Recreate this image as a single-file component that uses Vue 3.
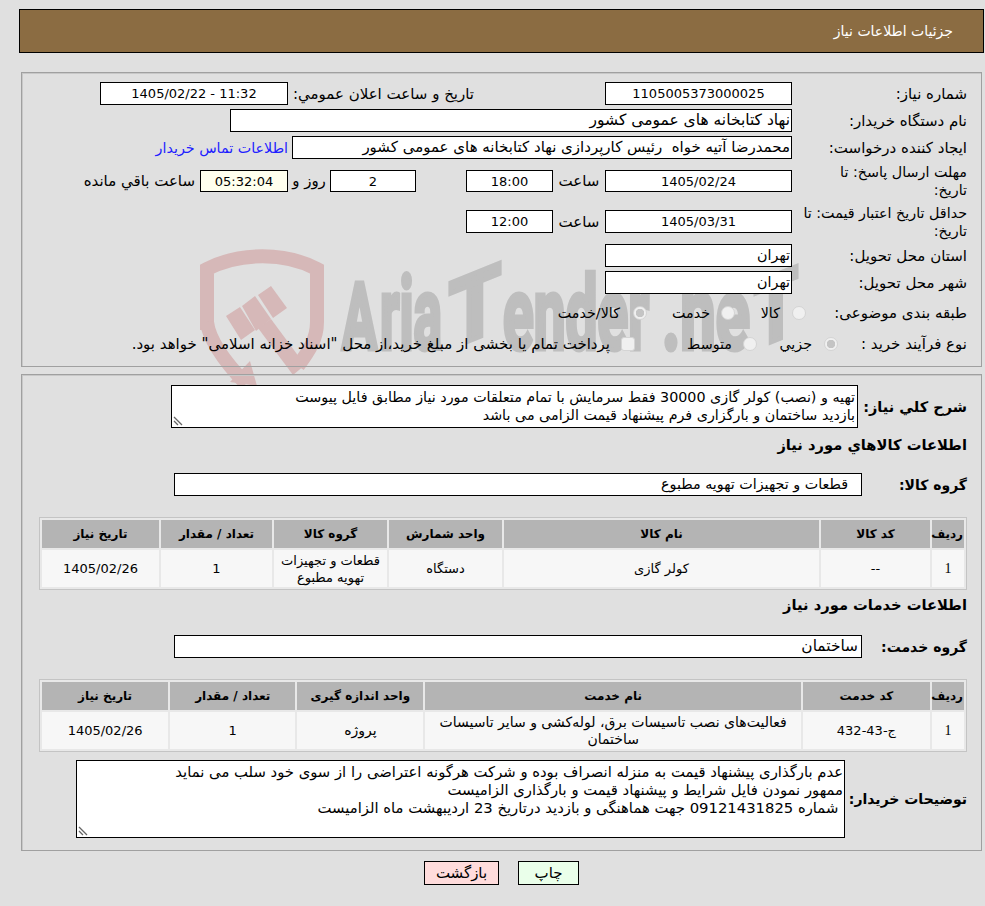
<template>
    <div class="page">
        <svg class="watermark" viewBox="0 0 985 906" width="985" height="906">
            <g fill="none" stroke="#d6b8b8" stroke-width="14">
                <path d="M207 330V269C240 252 285 252 317 269V322C317 340 308 352 298 366"/>
                <path d="M207 322C209 340 225 362 246 384"/>
            </g>
            <g fill="#d6b8b8">
                <path d="M258 328L271 319L305 365L293 375Z"/>
                <path d="M226 316L240 307L255 330L241 340Z"/>
                <path d="M242 306L255 296L271 319L256 331Z"/>
                <path d="M258 295L271 286L287 308L273 318Z"/>
                <path d="M250 361L257 386L230 382Z"/>
            </g>
            <g class="wm-text" fill="#bebebe" stroke="#bebebe" stroke-width="5">
                <text x="342" y="349" font-size="92" textLength="35" lengthAdjust="spacingAndGlyphs">A</text>
                <text x="380" y="349" font-size="102" textLength="62" lengthAdjust="spacingAndGlyphs">ria</text>
                <text transform="translate(449 349) skewY(-22)" font-size="92" textLength="52" lengthAdjust="spacingAndGlyphs">T</text>
                <text x="503" y="349" font-size="102" textLength="146" lengthAdjust="spacingAndGlyphs">ender</text>
                <text x="662" y="349" font-size="102" textLength="88" lengthAdjust="spacingAndGlyphs">.ne</text>
                <text transform="translate(754 349) skewY(-22)" font-size="92" textLength="44" lengthAdjust="spacingAndGlyphs">T</text>
            </g>
        </svg>

        <div class="header">جزئیات اطلاعات نیاز</div>

        <div class="panel panel-info">
            <div class="row">
                <div class="label">شماره نیاز:</div>
                <div class="field nums w-date">1105005373000025</div>
                <div class="text announce">تاریخ و ساعت اعلان عمومي:</div>
                <div class="field nums w-announce" dir="ltr">1405/02/22 - 11:32</div>
            </div>
            <div class="row">
                <div class="label">نام دستگاه خریدار:</div>
                <div class="field start w-buyer">نهاد کتابخانه های عمومی کشور</div>
            </div>
            <div class="row">
                <div class="label">ایجاد کننده درخواست:</div>
                <div class="field start w-creator">محمدرضا آتیه خواه &nbsp;رئیس کارپردازی نهاد کتابخانه های عمومی کشور</div>
                <a class="link">اطلاعات تماس خریدار</a>
            </div>
            <div class="row deadline">
                <div class="label two-line">مهلت ارسال پاسخ: تا<br>تاریخ:</div>
                <div class="field nums w-date short">1405/02/24</div>
                <div class="text hour">ساعت</div>
                <div class="field nums w-time short">18:00</div>
                <div class="field nums w-days short">2</div>
                <div class="text days">روز و</div>
                <div class="field nums w-left short">05:32:04</div>
                <div class="text">ساعت باقي مانده</div>
            </div>
            <div class="row validity">
                <div class="label two-line">حداقل تاریخ اعتبار قیمت: تا<br>تاریخ:</div>
                <div class="field nums w-date">1405/03/31</div>
                <div class="text hour">ساعت</div>
                <div class="field nums w-time">12:00</div>
            </div>
            <div class="row">
                <div class="label">استان محل تحویل:</div>
                <div class="field start w-date">تهران</div>
            </div>
            <div class="row">
                <div class="label">شهر محل تحویل:</div>
                <div class="field start w-date">تهران</div>
            </div>
            <div class="row subject">
                <div class="label">طبقه بندی موضوعی:</div>
                <span class="radio"></span><span class="text opt-kala">کالا</span>
                <span class="radio"></span><span class="text opt-khedmat">خدمت</span>
                <span class="radio checked"></span><span class="text opt-both">کالا/خدمت</span>
            </div>
            <div class="row process">
                <div class="label">نوع فرآیند خرید :</div>
                <span class="radio checked"></span><span class="text opt-jozi">جزیي</span>
                <span class="radio"></span><span class="text opt-motavaset">متوسط</span>
                <span class="check"></span><span class="text opt-pay">پرداخت تمام یا بخشی از مبلغ خرید،از محل "اسناد خزانه اسلامی" خواهد بود.</span>
            </div>
        </div>

        <div class="panel panel-detail">
            <div class="row-desc">
                <div class="title desc-label">شرح کلي نیاز:</div>
                <div class="area area-need">
                    <div>تهیه و (نصب) کولر گازی 30000 فقط سرمایش با تمام متعلقات مورد نیاز مطابق فایل پیوست</div>
                    <div>بازدید ساختمان و بارگزاری فرم پیشنهاد قیمت الزامی می باشد</div>
                    <svg class="grip" viewBox="0 0 10 10" width="10" height="10"><path d="M1 1L9 9M1 5L5 9" stroke="#666" stroke-width="1.3" fill="none"/></svg>
                </div>
            </div>
            <div class="heading goods-heading">اطلاعات کالاهاي مورد نیاز</div>
            <div class="row-group goods-group">
                <div class="title">گروه کالا:</div>
                <div class="field start group-field goods-field">قطعات و تجهیزات تهویه مطبوع</div>
            </div>
            <table class="grid grid-goods">
                <colgroup><col v-for="w in goodsCols" :key="w" :style="{width: w + 'px'}"></colgroup>
                <thead><tr><th v-for="h in goodsHead" :key="h">{{ h }}</th></tr></thead>
                <tbody><tr><td class="num">1</td><td v-for="c in goodsRow" :key="c" :class="{nums: /\d/.test(c)}">{{ c }}</td></tr></tbody>
            </table>
            <div class="heading service-heading">اطلاعات خدمات مورد نیاز</div>
            <div class="row-group service-group">
                <div class="title">گروه خدمت:</div>
                <div class="field start group-field service-field">ساختمان</div>
            </div>
            <table class="grid grid-service">
                <colgroup><col v-for="w in serviceCols" :key="w" :style="{width: w + 'px'}"></colgroup>
                <thead><tr><th v-for="h in serviceHead" :key="h">{{ h }}</th></tr></thead>
                <tbody><tr><td class="num">1</td><td v-for="c in serviceRow" :key="c" :class="{nums: /\d/.test(c)}">{{ c }}</td></tr></tbody>
            </table>
            <div class="row-notes">
                <div class="title notes-label">توضیحات خریدار:</div>
                <div class="area area-notes">
                    <div>عدم بارگذاری پیشنهاد قیمت به منزله انصراف بوده و شرکت هرگونه اعتراضی را از سوی خود سلب می نماید</div>
                    <div>ممهور نمودن فایل شرایط و پیشنهاد قیمت و بارگذاری الزامیست</div>
                    <div>&nbsp;شماره 09121431825 جهت هماهنگی و بازدید درتاریخ 23 اردیبهشت ماه الزامیست</div>
                    <svg class="grip" viewBox="0 0 10 10" width="10" height="10"><path d="M1 1L9 9M1 5L5 9" stroke="#666" stroke-width="1.3" fill="none"/></svg>
                </div>
            </div>
        </div>

        <div class="actions">
            <button class="btn btn-print">چاپ</button>
            <button class="btn btn-back">بازگشت</button>
        </div>
    </div>
</template>

<script setup>
const goodsCols = [32, 109, 315, 113, 113, 111, 117];
const goodsHead = ["ردیف", "کد کالا", "نام کالا", "واحد شمارش", "گروه کالا", "تعداد / مقدار", "تاریخ نیاز"];
const goodsRow = ["--", "کولر گازی", "دستگاه", "قطعات و تجهیزات تهویه مطبوع", "1", "1405/02/26"];

const serviceCols = [32, 127, 375, 126, 125, 126];
const serviceHead = ["ردیف", "کد خدمت", "نام خدمت", "واحد اندازه گیری", "تعداد / مقدار", "تاریخ نیاز"];
const serviceRow = ["ج-43-432", "فعالیت‌های نصب تاسیسات برق، لوله‌کشی و سایر تاسیسات ساختمان", "پروژه", "1", "1405/02/26"];
</script>

<style>
html, body {
    margin: 0;
    background: #e0e0e0;
}
</style>

<style scoped>
.page {
    position: relative;
    width: 985px;
    height: 906px;
    overflow: hidden;
    box-sizing: border-box;
    padding: 9px 1px 0 19px;
    direction: rtl;
    background: #e0e0e0;
    color: #000;
    font-family: "DejaVu Sans", sans-serif;
    font-size: 15px;
}

.watermark {
    position: absolute;
    left: 0;
    top: 0;
    direction: ltr;
    pointer-events: none;
}

.wm-text {
    font-family: Roboto, sans-serif;
    font-weight: 700;
}

.header, .panel, .actions {
    position: relative;
}

.header {
    height: 44px;
    box-sizing: border-box;
    border: 1px solid #000;
    background: #8b6c42;
    color: #fff;
    font-size: 14px;
    line-height: 42px;
    padding-right: 30px;
}

.panel {
    border: 1px solid #a0a0a0;
    box-shadow: inset 1px 1px 0 #c8c8c8;
    box-sizing: border-box;
    margin-left: 2px;
    margin-right: 2px;
    padding-right: 14px;
}

.panel-info {
    margin-top: 19px;
    height: 295px;
    padding-top: 9px;
    display: flex;
    flex-direction: column;
    gap: 4px;
}

.panel-detail {
    margin-top: 7px;
    height: 477px;
    padding-top: 10px;
}

.row {
    display: flex;
    align-items: center;
    min-height: 23px;
}

.row.deadline { height: 36px; }
.row.validity { height: 37px; }
.row.subject { height: 30px; }

.label {
    width: 175px;
    flex: none;
    box-sizing: border-box;
    padding-left: 4px;
    line-height: 18px;
}

.label.two-line {
    font-size: 14.3px;
    white-space: nowrap;
}

.subject .label { width: 161px; }
.process .label { width: 129px; }

.field {
    flex: none;
    height: 23px;
    box-sizing: border-box;
    border: 1px solid #000;
    background: #fff;
    text-align: center;
    line-height: 21px;
    white-space: nowrap;
    overflow: hidden;
}

.nums {
    font-size: 13px;
}

.field.short {
    height: 22px;
}

.field.start {
    text-align: right;
    padding-right: 1px;
}

.text {
    flex: none;
    white-space: nowrap;
}

.w-date { width: 187px; font-size: 14.3px; }
.w-date.nums { font-size: 13px; }
.w-announce { width: 188px; margin-right: 5px; }
.w-buyer { width: 562px; font-size: 15.5px; }
.w-creator { width: 500px; }
.w-time { width: 87px; }
.w-days { width: 86px; margin-right: 50px; }
.w-left { width: 88px; margin-left: 5px; background: #ffffee; }

.announce { width: 181px; margin-right: 131px; }
.hour { width: 52px; text-align: center; }
.days { width: 42px; text-align: center; }

.link {
    margin-right: 4px;
    color: #2020ff;
    font-size: 14.3px;
    white-space: nowrap;
}

.radio, .check {
    flex: none;
    width: 14px;
    height: 14px;
    box-sizing: border-box;
    border: 1px solid #d4d4d4;
    background: #f0f0f0;
}

.radio {
    border-radius: 50%;
}

.check {
    border-radius: 3px;
}

.radio.checked {
    background: radial-gradient(circle, #c4c4c4 0 4px, #f0f0f0 4.5px);
}

.opt-kala { width: 57px; padding-right: 12px; box-sizing: border-box; font-size: 14.3px; }
.opt-khedmat { width: 74px; padding-right: 11px; box-sizing: border-box; font-size: 14.3px; }
.opt-both { padding-right: 13px; font-size: 14.3px; }
.opt-jozi { width: 67px; padding-right: 12px; box-sizing: border-box; font-size: 14.3px; }
.opt-motavaset { width: 108px; padding-right: 11px; box-sizing: border-box; font-size: 14.3px; }
.opt-pay { padding-right: 11px; }

.title {
    font-weight: 700;
    font-size: 14px;
    white-space: nowrap;
}

.heading {
    font-weight: 700;
    font-size: 14.7px;
    white-space: nowrap;
    height: 20px;
    line-height: 20px;
}

.row-desc {
    display: flex;
    align-items: center;
    height: 43px;
}

.desc-label {
    width: 109px;
    flex: none;
    font-size: 14.5px;
}

.area {
    position: relative;
    flex: none;
    box-sizing: border-box;
    border: 1px solid #000;
    background: #fff;
    padding: 1px 1px 0 0;
    white-space: nowrap;
    overflow: hidden;
}

.area-need {
    width: 687px;
    height: 43px;
    padding: 2px 2px 0 0;
    font-size: 14.3px;
    line-height: 18px;
}

.area-notes {
    width: 769px;
    height: 78px;
    padding-top: 2px;
    font-size: 14.8px;
    line-height: 18px;
}

.grip {
    position: absolute;
    left: 1px;
    bottom: 1px;
}

.goods-heading { margin-top: 7px; }
.service-heading { margin-top: 5px; }

.row-group {
    display: flex;
    align-items: center;
}

.row-group .title {
    width: 105px;
    flex: none;
}

.goods-group { margin-top: 18px; }
.service-group { margin-top: 20px; }

.group-field {
    width: 688px;
}

.field.goods-field {
    padding-right: 13px;
    font-size: 14.3px;
}

.field.service-field {
    padding-right: 3px;
    font-size: 15.4px;
}

.grid {
    direction: rtl;
    table-layout: fixed;
    width: 928px;
    border-collapse: separate;
    border-spacing: 2px;
    border: 1px solid #c4c4c4;
    background: #e8e8e8;
    margin-top: 21px;
    text-align: center;
    box-sizing: border-box;
}

.grid th {
    height: 28px;
    padding: 0 1px;
    background: #b4b4b4;
    font-size: 12px;
    font-weight: 700;
}

.grid td {
    height: 37px;
    padding: 0 2px;
    background: #f7f7f7;
    line-height: 17px;
}

.grid-goods td { font-size: 13px; }
.grid-service td { font-size: 14px; }

.grid td.nums {
    font-size: 13px;
}

.grid td.num {
    padding: 0;
    font-family: "Liberation Serif", serif;
    font-size: 14px;
}

.row-notes {
    display: flex;
    align-items: center;
    margin-top: 8px;
}

.notes-label {
    width: 122px;
    flex: none;
}

.actions {
    display: flex;
    justify-content: center;
    gap: 19px;
    margin-top: 10px;
}

.btn {
    height: 24px;
    box-sizing: border-box;
    border: 1px solid #000;
    padding: 0;
    font: inherit;
    color: #000;
}

.btn-print {
    width: 61px;
    background: #eaffea;
}

.btn-back {
    width: 75px;
    background: #ffdcdc;
}
</style>
